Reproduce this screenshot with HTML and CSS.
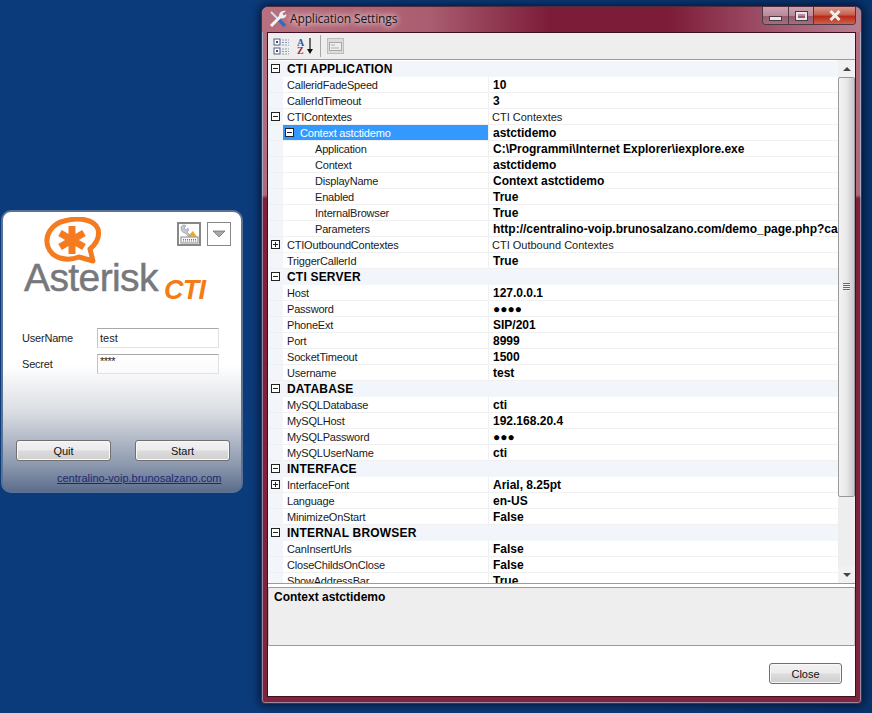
FILE: index.html
```html
<!DOCTYPE html>
<html>
<head>
  <title>Asterisk CTI</title>
  <link rel="stylesheet" href="styles.css">
</head>
<body>
  <!-- login window -->
  <div class="login">
    <div class="login-top">
      <div class="logo">
        <svg class="bubble" width="60" height="50" viewBox="0 0 60 50">
          <path d="M35 40 C22 45 8 41 4 30 C0 18 8 7 20 4 C34 0 50 2 54 12 C56 20 52 27 46 32 L49 44 Z" fill="none" stroke="#f47b20" stroke-width="5" stroke-linejoin="round"/>
          <g stroke="#f47b20" stroke-width="7">
            <line x1="28" y1="9" x2="28" y2="37"/>
            <line x1="16" y1="16" x2="40" y2="30"/>
            <line x1="40" y1="16" x2="16" y2="30"/>
          </g>
        </svg>
        <div class="logo-name">Asterisk<span class="logo-cti">CTI</span></div>
      </div>
      <div class="login-tools">
        <button class="tool-btn tool-on">
          <svg width="20" height="20" viewBox="0 0 20 20">
            <path d="M2 4 C2 1 6 0 7 2 L5 4 L7 6 L9 4 C10 6 9 8 8 8 L12 12 L10 13 L6 9 C4 9 2 7 2 4 Z" fill="#c4c8d6" stroke="#8a8fa3" stroke-width=".6"/>
            <path d="M9 12 L14 7 L18 13 Z" fill="#f2a81d"/>
            <rect x="2" y="13" width="17" height="6" fill="#f6f6f6" stroke="#8a8a8a"/>
            <path d="M4 15.5 H17 M4 17 H17" stroke="#777" stroke-dasharray="1 1"/>
          </svg>
        </button>
        <button class="tool-btn">
          <svg width="14" height="8" viewBox="0 0 14 8"><path d="M1 1 H13 L7 7 Z" fill="#a9a9a9" stroke="#666" stroke-width=".7"/></svg>
        </button>
      </div>
    </div>
    <div class="login-form">
      <div class="field"><label>UserName</label><div class="text-box">test</div></div>
      <div class="field"><label>Secret</label><div class="text-box secret">****</div></div>
    </div>
    <div class="login-btns">
      <button class="win-btn login-btn">Quit</button>
      <button class="win-btn login-btn">Start</button>
    </div>
    <a class="login-link" href="#">centralino-voip.brunosalzano.com</a>
  </div>

  <!-- settings window -->
  <div class="settings">
    <div class="titlebar">
      <svg class="title-icon" width="18" height="18" viewBox="0 0 18 18">
        <path d="M2 2 L9 9" stroke="#d8dde4" stroke-width="2"/>
        <path d="M9 9 L16 16" stroke="#2a6fc4" stroke-width="3.4"/>
        <path d="M2 16 L12 6" stroke="#f4f4f4" stroke-width="3"/>
        <path d="M10.500 7.500 C9 3 13 0 17 1 L13.500 3.500 L14.500 5.500 L17.500 4 C17.500 8 14 9.500 10.500 7.500 Z" fill="#f0f0f0"/>
      </svg>
      <span class="title-text">Application Settings</span>
      <div class="caption">
        <div class="cap-btn cap-min"><span></span></div>
        <div class="cap-btn cap-max"><span></span></div>
        <div class="cap-btn cap-close">
          <svg width="14" height="11" viewBox="0 0 14 11"><path d="M2.5 1 L11.5 10 M11.5 1 L2.5 10" stroke="#f1eeee" stroke-width="3"/></svg>
        </div>
      </div>
    </div>
    <div class="client">
      <div class="toolbar">
        <svg width="17" height="17" viewBox="0 0 17 17">
          <rect x="1" y="1" width="6" height="6" fill="#fff" stroke="#48628c"/>
          <rect x="1" y="10" width="6" height="6" fill="#fff" stroke="#48628c"/>
          <path d="M3 4 H5 M4 3 V5 M3 13 H5 M4 12 V14" stroke="#111"/>
          <path d="M9 2 H16 M9 4.500 H16 M9 7 H16 M9 11 H16 M9 13.500 H16 M9 16 H16" stroke="#8c9cb8" stroke-dasharray="2 1"/>
        </svg>
        <svg class="sort-icon" width="18" height="18" viewBox="0 0 18 18">
          <text x="1" y="9" class="sort-a">A</text>
          <text x="1" y="17" class="sort-z">Z</text>
          <path d="M14 1 V15" stroke="#111" stroke-width="1.200"/>
          <path d="M11 12 H17 L14 17 Z" fill="#111"/>
        </svg>
        <div class="tool-sep"></div>
        <svg width="17" height="16" viewBox="0 0 17 16">
          <rect x=".5" y=".5" width="16" height="15" fill="#dcdcdc" stroke="#bdbdbd"/>
          <rect x="2.500" y="4.500" width="12" height="8" fill="#eee" stroke="#a8a8a8"/>
          <path d="M4 7 H8 M4 10 H12" stroke="#b0b0b0"/>
        </svg>
      </div>
      <div class="grid-area">
        <div class="grid-rows">
          <div class="row cat"><div class="gutter"><i class="exp minus"></i></div><div class="name">CTI APPLICATION</div></div>
          <div class="row"><div class="gutter"></div><div class="name">CalleridFadeSpeed</div><div class="value">10</div></div>
          <div class="row"><div class="gutter"></div><div class="name">CallerIdTimeout</div><div class="value">3</div></div>
          <div class="row"><div class="gutter"><i class="exp minus"></i></div><div class="name">CTIContextes</div><div class="value plain">CTI Contextes</div></div>
          <div class="row"><div class="gutter"></div><div class="name selected"><i class="exp minus"></i>Context astctidemo</div><div class="value">astctidemo</div></div>
          <div class="row"><div class="gutter"></div><div class="name child">Application</div><div class="value">C:\Programmi\Internet Explorer\iexplore.exe</div></div>
          <div class="row"><div class="gutter"></div><div class="name child">Context</div><div class="value">astctidemo</div></div>
          <div class="row"><div class="gutter"></div><div class="name child">DisplayName</div><div class="value">Context astctidemo</div></div>
          <div class="row"><div class="gutter"></div><div class="name child">Enabled</div><div class="value">True</div></div>
          <div class="row"><div class="gutter"></div><div class="name child">InternalBrowser</div><div class="value">True</div></div>
          <div class="row"><div class="gutter"></div><div class="name child">Parameters</div><div class="value">http://centralino-voip.brunosalzano.com/demo_page.php?ca</div></div>
          <div class="row"><div class="gutter"><i class="exp plus"></i></div><div class="name">CTIOutboundContextes</div><div class="value plain">CTI Outbound Contextes</div></div>
          <div class="row"><div class="gutter"></div><div class="name">TriggerCallerId</div><div class="value">True</div></div>
          <div class="row cat"><div class="gutter"><i class="exp minus"></i></div><div class="name">CTI SERVER</div></div>
          <div class="row"><div class="gutter"></div><div class="name">Host</div><div class="value">127.0.0.1</div></div>
          <div class="row"><div class="gutter"></div><div class="name">Password</div><div class="value">●●●●</div></div>
          <div class="row"><div class="gutter"></div><div class="name">PhoneExt</div><div class="value">SIP/201</div></div>
          <div class="row"><div class="gutter"></div><div class="name">Port</div><div class="value">8999</div></div>
          <div class="row"><div class="gutter"></div><div class="name">SocketTimeout</div><div class="value">1500</div></div>
          <div class="row"><div class="gutter"></div><div class="name">Username</div><div class="value">test</div></div>
          <div class="row cat"><div class="gutter"><i class="exp minus"></i></div><div class="name">DATABASE</div></div>
          <div class="row"><div class="gutter"></div><div class="name">MySQLDatabase</div><div class="value">cti</div></div>
          <div class="row"><div class="gutter"></div><div class="name">MySQLHost</div><div class="value">192.168.20.4</div></div>
          <div class="row"><div class="gutter"></div><div class="name">MySQLPassword</div><div class="value">●●●</div></div>
          <div class="row"><div class="gutter"></div><div class="name">MySQLUserName</div><div class="value">cti</div></div>
          <div class="row cat"><div class="gutter"><i class="exp minus"></i></div><div class="name">INTERFACE</div></div>
          <div class="row"><div class="gutter"><i class="exp plus"></i></div><div class="name">InterfaceFont</div><div class="value">Arial, 8.25pt</div></div>
          <div class="row"><div class="gutter"></div><div class="name">Language</div><div class="value">en-US</div></div>
          <div class="row"><div class="gutter"></div><div class="name">MinimizeOnStart</div><div class="value">False</div></div>
          <div class="row cat"><div class="gutter"><i class="exp minus"></i></div><div class="name">INTERNAL BROWSER</div></div>
          <div class="row"><div class="gutter"></div><div class="name">CanInsertUrls</div><div class="value">False</div></div>
          <div class="row"><div class="gutter"></div><div class="name">CloseChildsOnClose</div><div class="value">False</div></div>
          <div class="row"><div class="gutter"></div><div class="name">ShowAddressBar</div><div class="value">True</div></div>
        </div>
        <div class="scrollbar">
          <div class="scroll-btn"><b class="arrow-up"></b></div>
          <div class="scroll-thumb"><span></span></div>
          <div class="scroll-track"></div>
          <div class="scroll-btn"><b class="arrow-down"></b></div>
        </div>
      </div>
      <div class="help-pane">Context astctidemo</div>
      <div class="footer"><button class="win-btn close-btn">Close</button></div>
    </div>
  </div>
</body>
</html>
```

FILE: styles.css
```css
body {
  margin: 0;
  height: 713px;
  overflow: hidden;
  position: relative;
  background: linear-gradient(90deg, #0b3b7a 0, #0b3b7a 70%, #08336c 100%);
  font-family: "Liberation Sans", Arial, sans-serif;
  font-size: 11px;
  color: #111;
}

/* login window */
.login {
  position: absolute;
  left: 1px;
  top: 210px;
  width: 242px;
  height: 283px;
  box-sizing: border-box;
  border: 2px solid #5a7294;
  border-radius: 10px;
  background: linear-gradient(180deg, #fff 0, #fff 55%, #d9dce2 72%, #8f9bb0 90%, #5d6e8d 100%);
  padding: 0 10px 0 13px;
}

.login-top {
  display: flex;
  justify-content: space-between;
  height: 116px;
}

.logo {
  width: 180px;
  margin-left: 8px;
  padding-top: 5px;
}

.bubble {
  display: block;
  margin-left: 20px;
}

.logo-name {
  margin-top: -10px;
  font-size: 39px;
  line-height: 42px;
  letter-spacing: -.6px;
  color: #77787c;
  -webkit-text-stroke: .5px #77787c;
  white-space: nowrap;
}

.logo-cti {
  margin-left: 6px;
  font-size: 27px;
  font-weight: bold;
  font-style: italic;
  letter-spacing: -.7px;
  color: #f57c14;
  -webkit-text-stroke: 0;
  position: relative;
  top: 8px;
}

.login-tools {
  display: flex;
  gap: 6px;
  padding-top: 10px;
  margin-left: -30px;
}

.tool-btn {
  width: 24px;
  height: 24px;
  padding: 0;
  box-sizing: border-box;
  border: 1px solid #888;
  background: #fff;
  display: flex;
  align-items: center;
  justify-content: center;
}

.tool-on {
  border: 2px solid #888;
}

.login-form {
  padding-left: 6px;
}

.field {
  display: flex;
  align-items: center;
  height: 20px;
  margin-bottom: 6px;
  font-size: 11px;
  letter-spacing: -.2px;
  color: #222;
}

.field label {
  width: 75px;
}

.text-box {
  width: 122px;
  height: 20px;
  box-sizing: border-box;
  border: 1px solid #dfe3e8;
  border-top-color: #a9a9a9;
  border-left-color: #c4c4c4;
  padding: 2px 2px;
  line-height: 14px;
  background: #fff;
  font-size: 11px;
  letter-spacing: 0;
}

.secret {
  line-height: 10px;
  padding-top: 1px;
  background: linear-gradient(180deg, #fff, #fafafa);
  letter-spacing: -.5px;
}

.login-btns {
  display: flex;
  justify-content: space-between;
  margin: 66px 1px 0 0;
}

.win-btn {
  box-sizing: border-box;
  border: 1px solid #707070;
  border-radius: 3px;
  background: linear-gradient(180deg, #f2f2f2 0, #ebebeb 48%, #dcdcdc 52%, #cfcfcf 100%);
  font-family: "Liberation Sans", Arial, sans-serif;
  font-size: 11px;
  color: #111;
  padding: 0;
  box-shadow: inset 0 0 0 1px #f8f8f8;
}

.login-btn {
  width: 95px;
  height: 21px;
}

.login-link {
  display: block;
  margin-top: 11px;
  margin-left: 41px;
  font-size: 11px;
  white-space: nowrap;
  color: #1b2a72;
}

/* settings window */
.settings {
  position: absolute;
  left: 261px;
  top: 6px;
  width: 601px;
  height: 698px;
  box-sizing: border-box;
  border: 1px solid #4d2b3b;
  border-radius: 7px 7px 4px 4px;
  padding: 0 5px 6px 5px;
  display: flex;
  flex-direction: column;
  background: linear-gradient(180deg, #b56f82 0, #b2687c 27%, #7f1f3c 27.500%, #81223f 100%);
  box-shadow: 0 0 9px 2px rgba(0, 0, 20, .6), inset 0 0 0 1px rgba(170, 220, 235, .55);
}

.titlebar {
  display: flex;
  align-items: flex-start;
  height: 25px;
  flex: none;
  margin: 0 -5px;
  padding-left: 7px;
  border-radius: 7px 7px 0 0;
  background: linear-gradient(90deg, #b8707f 0, #aa5d70 28%, #7c1c39 48%, #7c1c39 68%, #a4566f 86%, #b87f91 100%);
}

.title-icon {
  margin: 3px 3px 0 0;
}

.title-text {
  font-family: "Open Sans", sans-serif;
  font-size: 12px;
  letter-spacing: -.15px;
  line-height: 24px;
  color: #16161a;
  text-shadow: 0 0 6px #f3dfe2, 0 0 6px #f3dfe2;
}

.caption {
  display: flex;
  margin-left: auto;
  margin-right: 5px;
  height: 17px;
  border: 1px solid #4a3a44;
  border-top: none;
  border-radius: 0 0 4px 4px;
  overflow: hidden;
}

.cap-btn {
  height: 17px;
  display: flex;
  align-items: center;
  justify-content: center;
  background: linear-gradient(180deg, #cda3b0 0, #b98a9a 50%, #96596f 52%, #a56d80 100%);
}

.cap-min {
  width: 25px;
  border-right: 1px solid #4a3a44;
}

.cap-min span {
  width: 11px;
  height: 3px;
  margin-top: 6px;
  background: #e9e6e8;
  border: 1px solid #4a3a44;
}

.cap-max {
  width: 24px;
  border-right: 1px solid #4a3a44;
}

.cap-max span {
  width: 7px;
  height: 4px;
  border: 2px solid #e9e6e8;
  outline: 1px solid #4a3a44;
}

.cap-close {
  width: 41px;
  background: linear-gradient(180deg, #d9988c 0, #c9604e 45%, #b82a18 55%, #d0604c 100%);
}

.client {
  flex: 1;
  display: flex;
  flex-direction: column;
  background: #fff;
  border: 1px solid #3c1022;
}

.toolbar {
  flex: none;
  height: 27px;
  box-sizing: border-box;
  padding-left: 5px;
  display: flex;
  align-items: center;
  background: #eee;
  border-bottom: 1px solid #9a9a9a;
}

.sort-icon {
  margin-left: 6px;
}

.sort-a, .sort-z {
  font-family: "Liberation Serif", serif;
  font-size: 10px;
  font-weight: bold;
}

.sort-a {
  fill: #2456a8;
}

.sort-z {
  fill: #a02c2c;
}

.tool-sep {
  width: 1px;
  height: 22px;
  margin: 0 6px 0 6px;
  background: #a8a8a8;
}

.grid-area {
  flex: none;
  height: 523px;
  display: flex;
  border-bottom: 1px solid #9a9a9a;
}

.grid-rows {
  flex: 1;
  overflow: hidden;
  min-width: 0;
  padding-top: 1px;
}

.row {
  display: flex;
  height: 16px;
  box-sizing: border-box;
  border-bottom: 1px solid #f0f0f0;
  line-height: 17px;
  white-space: nowrap;
}

.gutter {
  flex: none;
  width: 15px;
  background: #f2f5fa;
  position: relative;
}

.name {
  flex: none;
  width: 206px;
  box-sizing: border-box;
  padding-left: 4px;
  border-right: 1px solid #f0f0f0;
  letter-spacing: -.2px;
  color: #1a1a1a;
}

.child {
  padding-left: 32px;
}

.selected {
  background: #3399ff;
  color: #fff;
  padding-left: 17px;
  position: relative;
  font-size: 11px;
}

.value {
  flex: 1;
  padding-left: 4px;
  overflow: hidden;
  font-size: 12px;
  font-weight: bold;
  color: #000;
}

.value.plain {
  font-size: 11px;
  font-weight: normal;
  padding-left: 3px;
  color: #1a1a1a;
}

.cat {
  background: #f2f5fa;
  border-bottom-color: #f2f5fa;
}

.cat .name {
  border-right: none;
  width: auto;
  font-size: 12px;
  font-weight: bold;
  letter-spacing: .2px;
  color: #000;
}

/* expand / collapse box */
.exp {
  position: absolute;
  left: 3px;
  top: 3px;
  width: 9px;
  height: 9px;
  box-sizing: border-box;
  border: 1px solid #222;
  background: linear-gradient(#222, #222) center / 5px 1px no-repeat, #fff;
}

.exp.plus {
  background: linear-gradient(#222, #222) center / 5px 1px no-repeat, linear-gradient(#222, #222) center / 1px 5px no-repeat, #fff;
}

.selected .exp {
  left: 2px;
}

.scrollbar {
  flex: none;
  width: 17px;
  display: flex;
  flex-direction: column;
  background: #eee;
}

.scroll-btn {
  flex: none;
  height: 17px;
  display: flex;
  align-items: center;
  justify-content: center;
  background: #f1f1f1;
}

.arrow-up, .arrow-down {
  width: 0;
  height: 0;
  border-left: 4px solid transparent;
  border-right: 4px solid transparent;
}

.arrow-up {
  border-bottom: 4px solid #444;
}

.arrow-down {
  border-top: 4px solid #444;
}

.scroll-thumb {
  flex: none;
  height: 420px;
  box-sizing: border-box;
  border: 1px solid #999;
  border-radius: 2px;
  background: linear-gradient(90deg, #f4f4f4 0, #e8e8e8 50%, #c8c8cc 100%);
  display: flex;
  align-items: center;
  justify-content: center;
}

.scroll-thumb span {
  width: 7px;
  height: 8px;
  background: repeating-linear-gradient(180deg, #6a6a6a 0, #6a6a6a 1px, #eee 1px, #eee 2px);
}

.scroll-track {
  flex: 1;
}

.help-pane {
  flex: none;
  height: 59px;
  margin-top: 3px;
  box-sizing: border-box;
  padding: 2px 5px;
  background: #eee;
  border-top: 1px solid #9a9a9a;
  border-bottom: 1px solid #9a9a9a;
  border-left: 1px solid #c8c8c8;
  border-right: 1px solid #c8c8c8;
  font-size: 12px;
  font-weight: bold;
  color: #000;
}

.footer {
  flex: 1;
  display: flex;
  justify-content: flex-end;
  padding: 17px 13px 0 0;
}

.close-btn {
  width: 73px;
  height: 21px;
}
```
